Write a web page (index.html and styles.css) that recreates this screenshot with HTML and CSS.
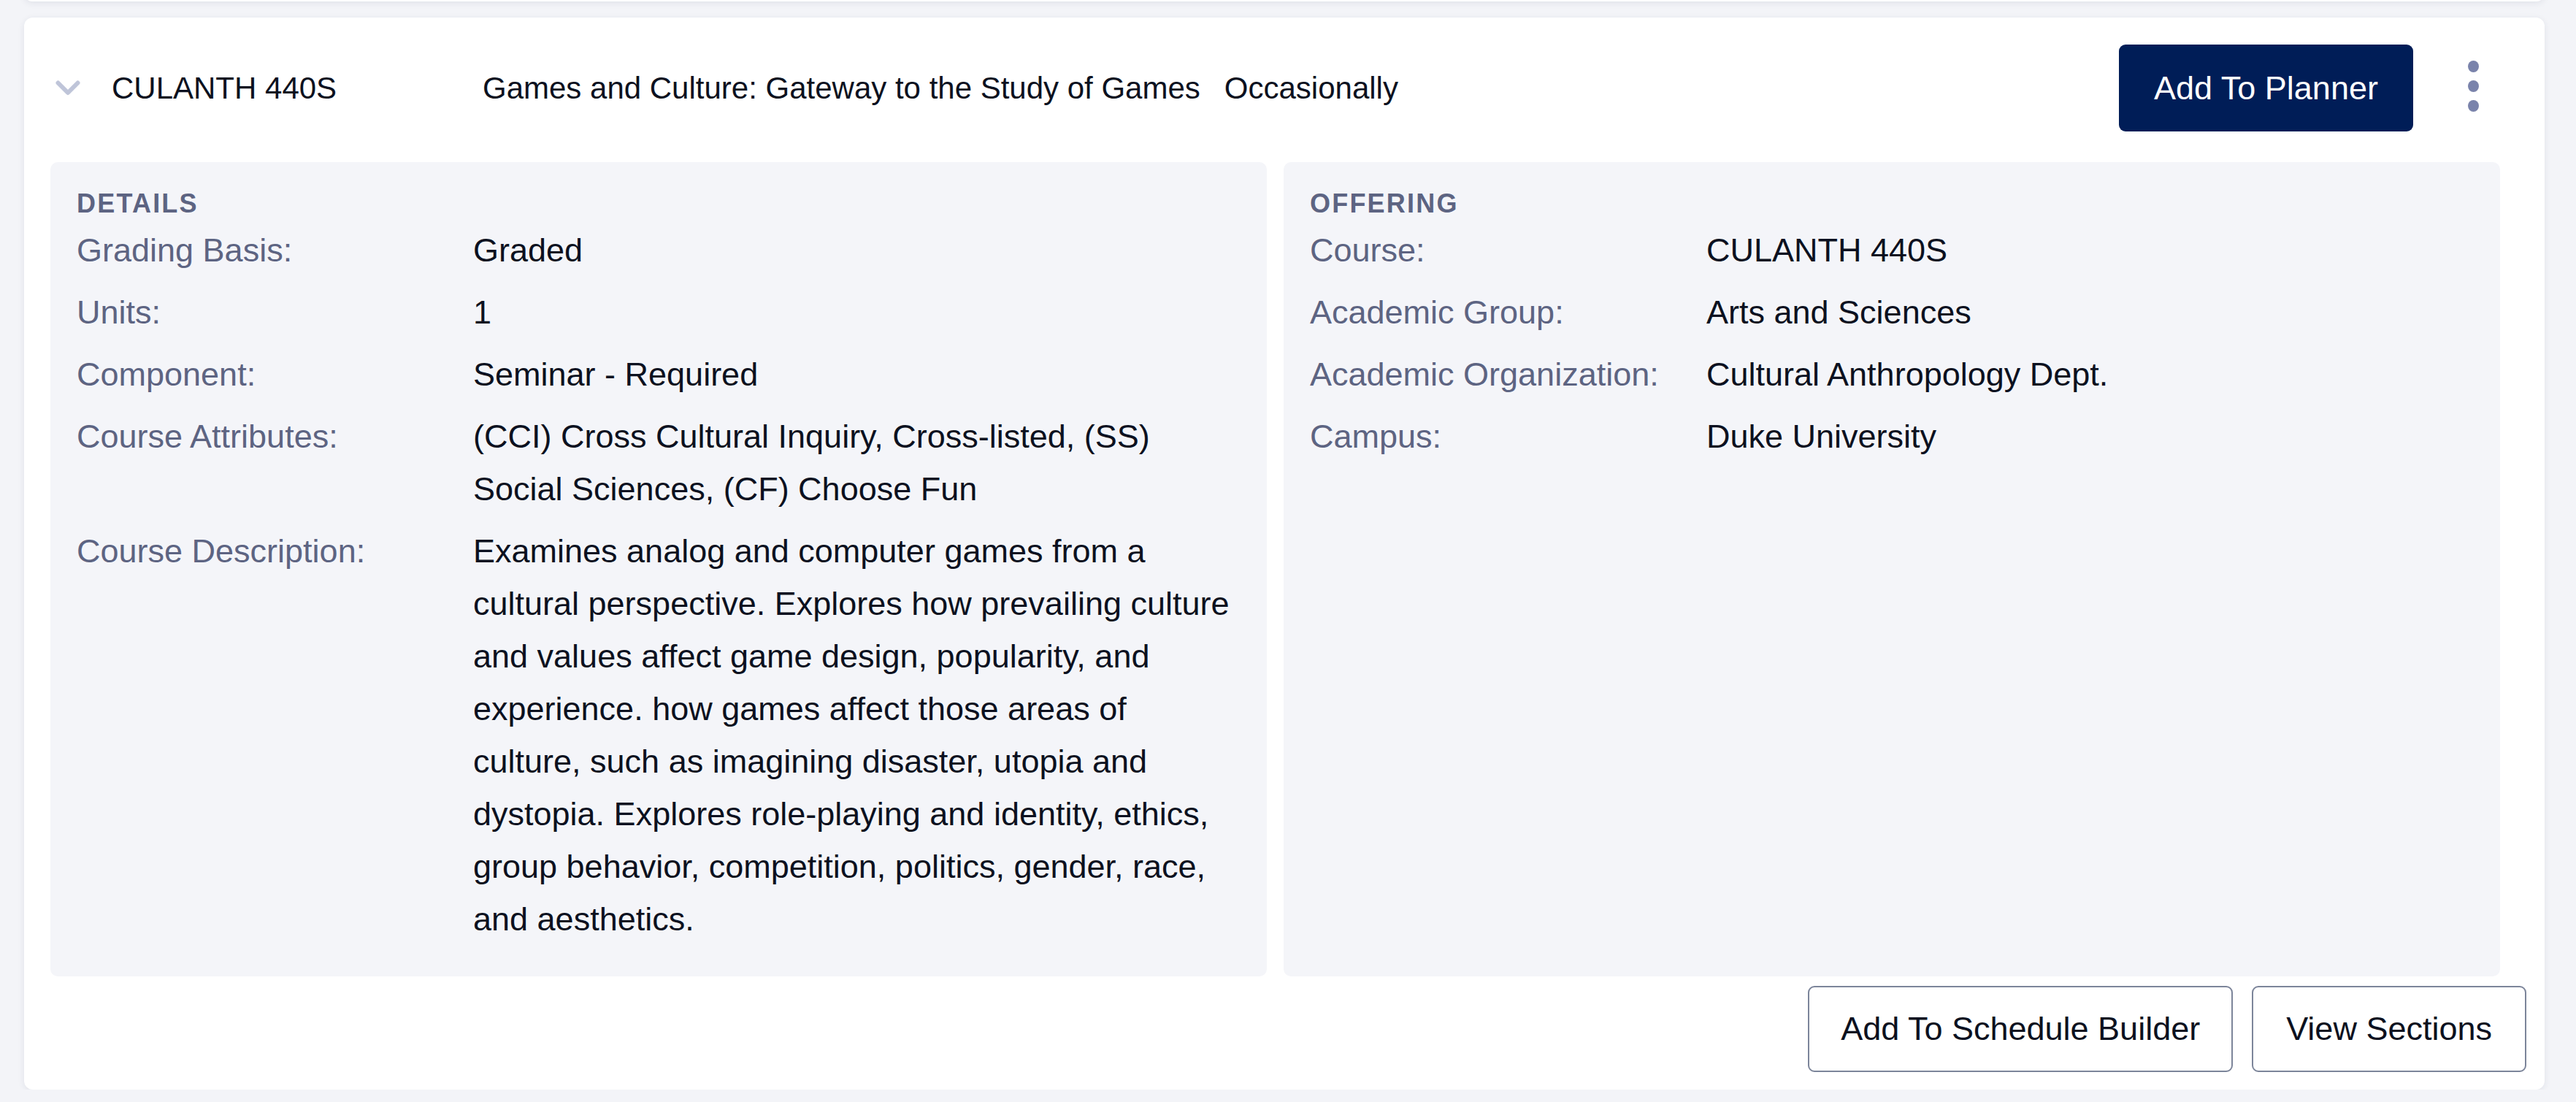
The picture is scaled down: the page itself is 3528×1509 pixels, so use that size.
FILE: index.html
```html
<!DOCTYPE html>
<html lang="en">
<head>
<meta charset="utf-8">
<title>Course</title>
<link rel="stylesheet" href="styles.css">
</head>
<body>
<div class="list">
  <div class="card card-stub"></div>
  <div class="card">
    <div class="card-head">
      <svg class="chevron" width="34" height="21" viewBox="0 0 34 21" aria-hidden="true">
        <polyline points="3.5,3.5 17,17 30.5,3.5" fill="none" stroke="#bfc5d9" stroke-width="6" stroke-linecap="round" stroke-linejoin="round"/>
      </svg>
      <div class="code">CULANTH 440S</div>
      <div class="title">Games and Culture: Gateway to the Study of Games</div>
      <div class="freq">Occasionally</div>
      <div class="spacer"></div>
      <button class="btn btn-primary">Add To Planner</button>
      <div class="kebab"><span></span><span></span><span></span></div>
    </div>
    <div class="panels">
      <section class="panel">
        <h3 class="panel-title">DETAILS</h3>
        <dl class="rows">
          <dt>Grading Basis:</dt><dd>Graded</dd>
          <dt>Units:</dt><dd>1</dd>
          <dt>Component:</dt><dd>Seminar - Required</dd>
          <dt>Course Attributes:</dt><dd>(CCI) Cross Cultural Inquiry, Cross-listed, (SS) Social Sciences, (CF) Choose Fun</dd>
          <dt>Course Description:</dt><dd>Examines analog and computer games from a cultural perspective. Explores how prevailing culture and values affect game design, popularity, and experience. how games affect those areas of culture, such as imagining disaster, utopia and dystopia. Explores role-playing and identity, ethics, group behavior, competition, politics, gender, race, and aesthetics.</dd>
        </dl>
      </section>
      <section class="panel">
        <h3 class="panel-title">OFFERING</h3>
        <dl class="rows">
          <dt>Course:</dt><dd>CULANTH 440S</dd>
          <dt>Academic Group:</dt><dd>Arts and Sciences</dd>
          <dt>Academic Organization:</dt><dd>Cultural Anthropology Dept.</dd>
          <dt>Campus:</dt><dd>Duke University</dd>
        </dl>
      </section>
    </div>
    <div class="card-foot">
      <button class="btn btn-outline">Add To Schedule Builder</button>
      <button class="btn btn-outline">View Sections</button>
    </div>
  </div>
</div>
</body>
</html>
```

FILE: styles.css
```css
* { box-sizing: border-box; }

html, body {
  margin: 0;
  padding: 0;
}

body {
  background: #f3f4f8;
  font-family: "Liberation Sans", Arial, sans-serif;
  color: #0c1120;
}

.list {
  display: flex;
  flex-direction: column;
  gap: 22px;
  margin-top: -20px;
  padding: 0 43px 0 33px;
}

.card {
  background: #ffffff;
  border-radius: 12px;
  box-shadow: 0 2px 10px rgba(30, 40, 80, 0.09);
  padding: 36px 25px 24px 36px;
}

.card-stub {
  height: 22px;
  padding: 0;
}

.card-head {
  display: flex;
  align-items: center;
  height: 119px;
  padding: 2px 65px 0 7px;
  margin-bottom: 43px;
}

.chevron {
  display: block;
  flex: none;
  margin-right: 43px;
}

.code {
  width: 508px;
  flex: none;
  font-size: 42px;
}

.title {
  font-size: 42px;
  margin-right: 33px;
}

.freq {
  font-size: 42px;
}

.spacer {
  flex: 1;
}

.btn {
  font-family: "Liberation Sans", Arial, sans-serif;
  font-size: 45px;
  border-radius: 9px;
  cursor: pointer;
  white-space: nowrap;
}

.btn-primary {
  height: 119px;
  width: 403px;
  background: #001d57;
  color: #ffffff;
  border: none;
  padding: 0;
}

.kebab {
  display: flex;
  flex-direction: column;
  gap: 11px;
  margin-left: 75px;
  margin-top: -5px;
}

.kebab span {
  display: block;
  width: 15px;
  height: 16px;
  border-radius: 50%;
  background: #7a83ab;
}

.panels {
  display: grid;
  grid-template-columns: 1fr 1fr;
  gap: 23px;
  margin-right: 36px;
}

.panel {
  background: #f4f5f9;
  border-radius: 10px;
  padding: 36px;
}

.panel-title {
  margin: 0;
  font-size: 36px;
  font-weight: bold;
  letter-spacing: 2.2px;
  color: #5d6482;
  line-height: normal;
}

.rows {
  display: grid;
  grid-template-columns: 543px 1fr;
  margin: 0;
  font-size: 45px;
  line-height: 72px;
}

.rows dt,
.rows dd {
  margin: 0;
  padding: 6.5px 0;
}

.rows dt {
  color: #5d6482;
}

.rows dd {
  color: #0c1120;
}

.card-foot {
  display: flex;
  justify-content: flex-end;
  gap: 26px;
  margin-top: 13px;
}

.btn-outline {
  height: 118px;
  background: #ffffff;
  color: #0c1120;
  border: 2px solid #7c859a;
  padding: 0 43px;
}

.btn-outline:last-child {
  padding: 0 45px;
}
```
